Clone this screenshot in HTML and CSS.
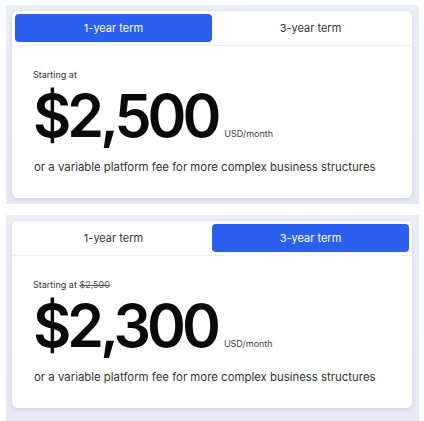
FILE: index.html
```html
<!DOCTYPE html>
<html lang="en">
<head>
    <meta charset="UTF-8">
    <meta name="viewport" content="width=device-width, initial-scale=1.0">
    <title>Pricing</title>
    <link rel="stylesheet" href="styles.css">
</head>
<body>
    <div class="panel">
        <div class="price-card">
            <div class="term-tabs">
                <button class="term-tab active">1-year term</button>
                <button class="term-tab">3-year term</button>
            </div>
            <div class="price-body">
                <p class="starting">Starting at</p>
                <div class="price-row">
                    <span class="amount">$2,500</span>
                    <span class="unit">USD/month</span>
                </div>
                <p class="note">or a variable platform fee for more complex business structures</p>
            </div>
        </div>
    </div>

    <div class="panel panel-last">
        <div class="price-card">
            <div class="term-tabs">
                <button class="term-tab">1-year term</button>
                <button class="term-tab active">3-year term</button>
            </div>
            <div class="price-body">
                <p class="starting">Starting at <s>$2,500</s></p>
                <div class="price-row">
                    <span class="amount">$2,300</span>
                    <span class="unit">USD/month</span>
                </div>
                <p class="note">or a variable platform fee for more complex business structures</p>
            </div>
        </div>
    </div>
</body>
</html>
```

FILE: styles.css
```css
body {
    margin: 0;
    padding: 5px 5px 0 6px;
    font-family: Inter, "Noto Sans", sans-serif;
    background: #fff;
}
.panel {
    background: linear-gradient(180deg, #eceef7, #e6e9f5);
    padding: 6px 7px 6px 6px;
    margin-bottom: 11px;
}
.panel-last {
    margin-bottom: 0;
    padding-bottom: 14px;
}
.price-card {
    background: #fff;
    border-radius: 6px;
    box-shadow: 0 1px 4px rgba(50, 60, 110, 0.14);
    overflow: hidden;
}
.term-tabs {
    display: flex;
    padding: 3px;
    border-bottom: 1px solid #eeeff3;
}
.term-tab {
    flex: 1;
    height: 28px;
    border: none;
    border-radius: 4px;
    background: transparent;
    color: #333;
    font-family: inherit;
    font-size: 11px;
    cursor: pointer;
}
.term-tab.active {
    background: #2a5ff0;
    color: #fff;
}
.price-body {
    padding: 23px 22px 24px 21px;
}
.starting {
    margin: 0;
    font-size: 9px;
    color: #333;
}
.starting s {
    color: #555;
}
.price-row {
    display: flex;
    align-items: baseline;
    margin-top: 1px;
}
.amount {
    font-size: 59px;
    font-weight: 600;
    letter-spacing: -4px;
    line-height: 70px;
    color: #0a0a0a;
}
.unit {
    font-size: 9px;
    color: #444;
    margin-left: 7px;
}
.note {
    margin: 9px 0 0 1px;
    font-size: 11.4px;
    color: #333;
}
```
